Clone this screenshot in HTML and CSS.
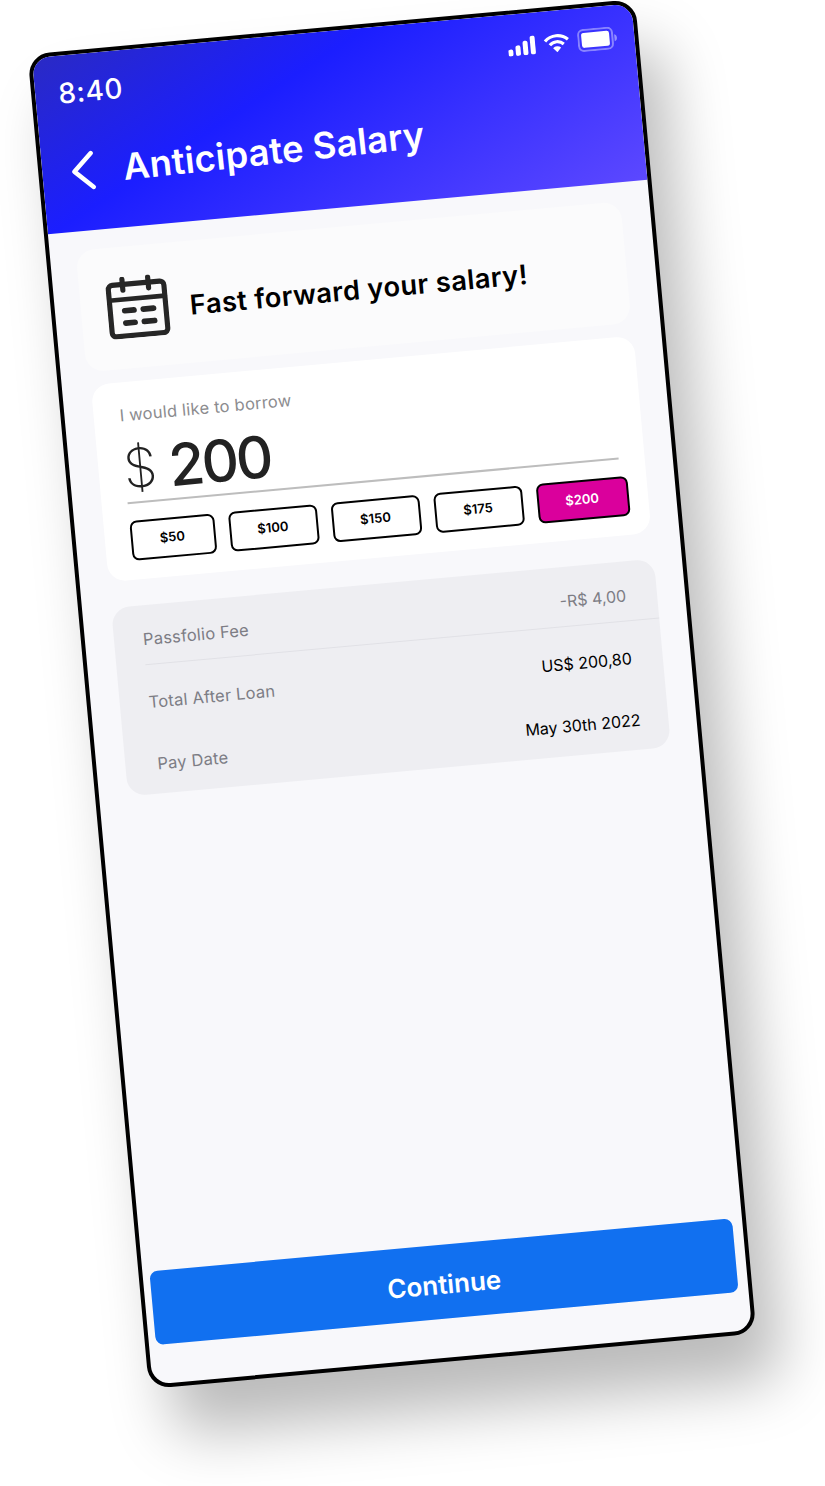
FILE: index.html
```html
<!DOCTYPE html>
<html lang="en">
<head>
<meta charset="utf-8">
<title>Anticipate Salary</title>
<link rel="stylesheet" href="styles.css">
</head>
<body>
<div class="phone">
  <header class="header">
    <div class="status">
      <span class="time">8:40</span>
      <div class="status-icons">
        <svg class="signal" width="28" height="19" viewBox="0 0 28 19"><g fill="#fff"><rect x="0" y="12" width="5" height="7" rx="2"/><rect x="7.5" y="8.5" width="5" height="10.5" rx="2"/><rect x="15" y="4.5" width="5" height="14.5" rx="2"/><rect x="22.5" y="0" width="5" height="19" rx="2"/></g></svg>
        <svg class="wifi" width="26" height="20" viewBox="0 0 26 20"><g fill="none" stroke="#fff" stroke-width="3.2"><path d="M1.5 8 A16.5 16.5 0 0 1 24.5 8"/><path d="M6 12.2 A10 10 0 0 1 20 12.2"/></g><path d="M9 15.6 A5.6 5.6 0 0 1 17 15.6 L13 20 Z" fill="#fff"/></svg>
        <svg class="battery" width="40" height="23" viewBox="0 0 40 23"><rect x="1" y="1" width="34" height="21" rx="5" fill="none" stroke="#fff" stroke-opacity=".4" stroke-width="2"/><rect x="4" y="4" width="28" height="15" rx="2.5" fill="#fff"/><path d="M37 8 C39 8.5 39.5 10 39.5 11.500 C39.500 13 39 14.500 37 15 Z" fill="#fff" fill-opacity=".45"/></svg>
      </div>
    </div>
    <div class="title-row">
      <svg class="back" width="26" height="40" viewBox="0 0 26 40"><path d="M22 3 L4 20 L22 37" fill="none" stroke="#fff" stroke-width="4.500" stroke-linecap="round" stroke-linejoin="round"/></svg>
      <h1 class="title">Anticipate Salary</h1>
    </div>
  </header>
  <main class="main">
    <section class="card promo">
      <svg class="calendar" width="62" height="62" viewBox="0 0 60 60"><g fill="none" stroke="#262626" stroke-linecap="round"><rect x="3" y="7.500" width="54" height="50" rx="4" stroke-width="5"/><path d="M17 2.500 V13 M42 2.500 V13" stroke-width="5"/><path d="M3 22 H57" stroke-width="4.500"/><path d="M17 33 H26 M35 33 H45 M17 45 H26 M35 45 H45" stroke-width="5.500"/></g></svg>
      <h2 class="promo-text">Fast forward your salary!</h2>
    </section>
    <section class="card borrow">
      <p class="borrow-label">I would like to borrow</p>
      <div class="amount"><span class="currency">$</span><span class="value">200</span></div>
      <div class="chips">
        <span class="chip chip-small">$50</span>
        <span class="chip">$100</span>
        <span class="chip">$150</span>
        <span class="chip">$175</span>
        <span class="chip chip-active">$200</span>
      </div>
    </section>
    <section class="card details">
      <div class="row row-first"><span class="key">Passfolio Fee</span><span class="val val-muted">-R$ 4,00</span></div>
      <div class="row"><span class="key">Total After Loan</span><span class="val">US$ 200,80</span></div>
      <div class="row"><span class="key key-inset">Pay Date</span><span class="val val-wide">May 30th 2022</span></div>
    </section>
    <button class="continue" type="button">Continue</button>
  </main>
</div>
</body>
</html>
```
FILE: styles.css
```css
* { box-sizing: border-box; }
html, body { margin: 0; padding: 0; background: #fff; }
body {
  width: 825px;
  height: 1486px;
  overflow: hidden;
  font-family: Inter, "Liberation Sans", sans-serif;
}
.phone {
  width: 610px;
  height: 1340px;
  margin: 24px 0 0 87px;
  border: 4px solid #000;
  border-radius: 22px;
  background: #f8f8fb;
  overflow: hidden;
  transform: rotate(-5.2deg);
  box-shadow: 22px 48px 60px rgba(0, 0, 0, .27);
  display: flex;
  flex-direction: column;
}
.header {
  height: 177px;
  flex: none;
  background: linear-gradient(152deg, #2a2ac4 0%, #1b1eff 36%, #5c48ff 100%);
  color: #fff;
}
.status {
  height: 68px;
  display: flex;
  justify-content: space-between;
  align-items: center;
  padding: 0 17px 0 23px;
}
.time { font-size: 28px; font-weight: 500; margin-top: 8px; letter-spacing: .6px; }
.status-icons { display: flex; align-items: center; gap: 8px; margin-top: -4px; }
.title-row {
  height: 98px;
  display: flex;
  align-items: center;
  gap: 27px;
  padding-left: 28px;
}
.title { margin: 0; font-size: 36.300px; font-weight: 600; letter-spacing: .2px; white-space: nowrap; transform: rotate(-1deg); transform-origin: left center; }
.main { flex: 1; display: flex; flex-direction: column; }
.card { border-radius: 18px; }
.promo {
  width: 547px;
  height: 122px;
  margin: 19px 0 0 26px;
  background: #fbfbfc;
  display: flex;
  align-items: center;
  gap: 21px;
  padding-left: 26px;
}
.promo-text { margin: 6px 0 0; font-size: 27.300px; font-weight: 600; letter-spacing: .4px; color: #000; white-space: nowrap; }
.borrow {
  width: 545px;
  height: 198px;
  margin: 13px 0 0 29px;
  background: #fff;
  padding: 23px 26px 0 26px;
}
.borrow-label { margin: 0; font-size: 16.500px; line-height: 20px; letter-spacing: .25px; color: #8c8c8f; }
.amount {
  height: 69px;
  margin-top: 10px;
  border-bottom: 2px solid #bdbdbd;
  display: flex;
  align-items: center;
  gap: 12px;
  color: #222;
}
.currency { font-size: 54px; font-weight: 200; margin-left: -1px; }
.value { font-size: 58px; font-weight: 500; letter-spacing: -3px; }
.chips { display: flex; gap: 14px; margin: 17px 0 0 0; }
.chip {
  width: 89px;
  height: 40px;
  flex: none;
  padding: 0 2px 2px 0;
  border: 2px solid #000;
  border-radius: 7px;
  background: #fff;
  display: flex;
  align-items: center;
  justify-content: center;
  font-size: 13px;
  font-weight: 600;
  color: #000;
}
.chip-small { width: 85px; }
.chip-active { width: 92px; background: #da009c; color: #fff; }
.details {
  width: 545px;
  height: 189px;
  margin: 26px 0 0 29px;
  background: #eeeef2;
  display: grid;
  grid-template-rows: 58px 74px 50px;
  padding: 2px 0 0 29px;
}
.row { display: flex; justify-content: space-between; align-items: center; padding-right: 31px; font-size: 16px; }
.row-first { border-bottom: 1px solid #e1e1e6; padding-top: 6px; }
.key { color: #7d7d85; font-size: 16.500px; letter-spacing: .2px; }
.key-inset { margin-left: 3px; }
.val { color: #000; }
.val-muted { color: #7d7d85; }
.val-wide { margin-right: -3px; }
.continue {
  width: 585px;
  height: 74px;
  margin: 475px 0 0 7px;
  padding: 5px 0 0;
  border: 0;
  border-radius: 8px;
  background: #1170f0;
  color: #fff;
  font-family: inherit;
  font-size: 26px;
  font-weight: 600;
}
```
